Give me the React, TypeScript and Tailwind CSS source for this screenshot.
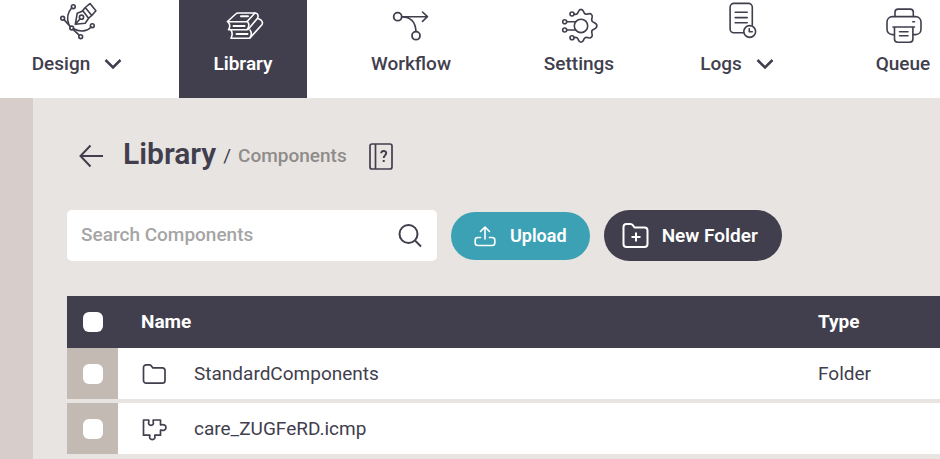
import type { ReactNode } from "react";
import clsx from "clsx";

function Icon({ children }: { children: ReactNode }) {
  return (
    <svg
      viewBox="0 0 44 44"
      className="size-11 shrink-0"
      fill="none"
      stroke="currentColor"
      strokeWidth="1.6"
      strokeLinecap="round"
      strokeLinejoin="round"
      aria-hidden="true"
    >
      {children}
    </svg>
  );
}

const designIcon = (
  <Icon>
    <circle cx="18.3" cy="6.7" r="1.9" />
    <circle cx="7.7" cy="18.3" r="1.9" />
    <circle cx="16.7" cy="28" r="1.9" />
    <circle cx="37.3" cy="25.7" r="1.9" />
    <circle cx="25.7" cy="36.7" r="1.9" />
    <path d="M9 19.6l6.400 7M18 29.400l6.400 6" />
    <path d="M16.800 7.800c-4 4.500-5.400 10-3 16.400M18.600 28.700c6 3.600 14 2.800 17.500-1.600" />
    <path d="M20.300 24.300l1.900-11 5.800-2.300 5.600 7.300-3.400 4.900zM20.300 24.300l4.700-5.300" />
    <circle cx="26.500" cy="17.200" r="2.100" />
    <path d="M27.600 10.800l2.600-3.300 6.600 8-3.200 2.600M30.200 7.500l4.800-3.900 5.900 7.200-4.100 4.700" />
  </Icon>
);

const libraryIcon = (
  <Icon>
    <path d="M6.500 21.500l8.200-7.500c.7-.7 1.500-1 2.500-1h16.500c3 0 3.900 2.300 3 5l-9 10.700c-.6.700-1.200 1-2 1H7.500c1.600-2.200 1.600-5 0-7.200" />
    <path d="M6.500 21.800h18c1 0 1.800-.4 2.400-1.100l7-7.700M26.500 21.800c1.900 1.500 1.700 5-.3 7.500" />
    <path d="M20 16.300h7M12.500 25.900h11" strokeWidth="2" />
    <path d="M10 30c1.500 2.600 1.500 5.400 0 8.200h17.500c1 0 1.800-.4 2.400-1.200l11-12.300c1.200-2 .5-4.600-3.400-6" />
    <path d="M29 30c1.600 2 1.600 5 0 7.800" />
    <path d="M15.500 34h11" strokeWidth="2" />
  </Icon>
);

const workflowIcon = (
  <Icon>
    <circle cx="8.700" cy="16.700" r="4" strokeWidth="1.800" />
    <circle cx="27" cy="35.700" r="4" strokeWidth="1.800" />
    <path d="M12.700 16.700h25.500M33.500 12l5 4.700-5 4.700M13 17c8.500 0 13.500 5 14 14.500" />
  </Icon>
);

const settingsIcon = (
  <Icon>
    <circle cx="15" cy="14" r="2" />
    <circle cx="7.700" cy="21.700" r="2" />
    <circle cx="7.700" cy="30" r="2" />
    <circle cx="15" cy="37.700" r="2" />
    <circle cx="24" cy="25.900" r="6.700" />
    <path d="M9.700 21.700h9M9.700 30h9" />
    <path d="M17 14c1.500.6 3 .4 3.800-1 .9-1.700.8-3.600 3.200-3.600s2.300 1.900 3.200 3.600c1 1.700 2.700 1.400 4.300.8 2.400-.7 4.400 1.300 3.600 3.700-.6 1.700-1 3.400.8 4.400 1.700.9 4 1.200 4 3.900s-2.300 3-4 3.900c-1.800 1-1.400 2.700-.8 4.400.8 2.400-1.200 4.400-3.600 3.700-1.600-.6-3.300-.9-4.300.8-.9 1.700-.8 3.600-3.200 3.600s-2.300-1.900-3.200-3.600c-.8-1.400-2.300-1.500-3.800-.9" />
  </Icon>
);

const logsIcon = (
  <Icon>
    <path d="M28.800 32.700h-10c-2 0-3.700-1.700-3.700-3.700V7.200c0-2.100 1.700-3.800 3.800-3.800h14.600c2.100 0 3.800 1.700 3.800 3.800v18" />
    <path d="M20.200 12.300h12M20.200 17.600h12M20.200 22.800h12" />
    <circle cx="34.700" cy="31.500" r="5.900" />
    <path d="M34.300 28.700v3h3" />
  </Icon>
);

const queueIcon = (
  <Icon>
    <path d="M14 16.500v-4.300c0-1.800 1.300-3.100 3.100-3.100h12c1.800 0 3.200 1.300 3.200 3.100v4.300" />
    <path d="M13 34.600h-1.600c-3.100 0-5.400-2.400-5.400-5.400v-7c0-3.200 2.300-5.600 5.400-5.600h23.200c3.100 0 5.400 2.400 5.400 5.600v7c0 3-2.300 5.400-5.400 5.400h-2.300" />
    <path d="M12 27h21.500M13.500 27v12c0 1.900 1.300 3.200 3.200 3.200h12c1.900 0 3.200-1.300 3.200-3.200V27" />
    <path d="M18.500 31.700h8.500M18.500 35.800h8.500M31.800 21.700h1.700" />
  </Icon>
);

function Chevron() {
  return (
    <svg viewBox="0 0 18 12" className="h-3 w-[18px]" fill="none" stroke="currentColor" strokeWidth="2.500" aria-hidden="true">
      <path d="M1.500 2l7.500 7.500L16.500 2" />
    </svg>
  );
}

const navItems = [
  { label: "Design", icon: designIcon, width: "w-[154px] mr-[25px]", menu: true },
  { label: "Library", icon: libraryIcon, width: "w-32", active: true },
  { label: "Workflow", icon: workflowIcon, width: "w-52" },
  { label: "Settings", icon: settingsIcon, width: "w-32" },
  { label: "Logs", icon: logsIcon, width: "w-[188px]", menu: true },
  { label: "Queue", icon: queueIcon, width: "w-36" },
];

function FolderIcon() {
  return (
    <svg viewBox="0 0 26 24" className="h-6 w-[26px]" fill="none" stroke="currentColor" strokeWidth="1.700" strokeLinejoin="round" aria-hidden="true">
      <path d="M2.500 18.500v-13c0-1.500 1.200-2.700 2.700-2.700h3.100c.9 0 1.600.4 2.100 1.100l1.500 2h9.400c1.500 0 2.700 1.200 2.700 2.700v9.900c0 1.500-1.200 2.700-2.700 2.700H5.200c-1.500 0-2.700-1.200-2.700-2.700z" />
    </svg>
  );
}

function PuzzleIcon() {
  return (
    <svg viewBox="0 0 26 24" className="h-6 w-[26px]" fill="none" stroke="currentColor" strokeWidth="1.700" strokeLinejoin="round" aria-hidden="true">
      <path d="M2.500 3h5.300v2c-.8 1.900.3 3.300 2.200 3.300s3-1.400 2.200-3.300V3h7.300v4.800h1.200c1.800-.8 4.300.4 4.300 2.700s-2.500 3.500-4.300 2.700h-1.200v5h-5.700v.9c.8 1.900-.5 3.500-2.500 3.500s-3.300-1.600-2.500-3.500v-.9H2.500z" />
    </svg>
  );
}

const rows = [
  { name: "StandardComponents", type: "Folder", icon: <FolderIcon /> },
  { name: "care_ZUGFeRD.icmp", type: "", icon: <PuzzleIcon /> },
];

function Checkbox({ label }: { label: string }) {
  return (
    <input
      type="checkbox"
      aria-label={label}
      className="block mx-auto size-5 appearance-none rounded-md bg-white checked:bg-[#3da1b5]"
    />
  );
}

export default function App() {
  return (
    <div className="min-h-screen flex flex-col overflow-hidden bg-[#e8e4e1] text-[19px] leading-6 text-[#413e4d] font-['Roboto',sans-serif]">
      <nav className="flex bg-white font-medium">
        {navItems.map((item) => (
          <a
            key={item.label}
            href="#"
            className={clsx(
              "shrink-0 flex flex-col items-center gap-2 pb-[22px]",
              item.width,
              item.active && "bg-[#413e4d] text-white font-semibold"
            )}
          >
            {item.icon}
            <span className="flex items-center gap-[14px]">
              {item.label}
              {item.menu && <Chevron />}
            </span>
          </a>
        ))}
      </nav>

      <div className="flex flex-1">
        <aside className="w-[33px] shrink-0 bg-[#d7cdca]" />
        <main className="flex-1 min-w-0 pl-[34px] pt-[38px]">
          <header className="flex items-center pl-3">
            <button type="button" aria-label="Back" className="mr-5 pt-1">
              <svg viewBox="0 0 24 24" className="size-6" fill="none" stroke="currentColor" strokeWidth="2" aria-hidden="true">
                <path d="M24 12H1.500M11.500 1.500L1.500 12l10 10.500" />
              </svg>
            </button>
            <h1 className="text-[30px] leading-9 font-semibold">Library</h1>
            <span className="mx-[7px] pt-1">/</span>
            <a href="#" className="pt-1 font-medium text-[#8f8b8a]">
              Components
            </a>
            <button type="button" aria-label="Help" className="ml-[22px] pt-1">
              <svg viewBox="0 0 24 28" className="h-7 w-6" fill="none" stroke="currentColor" strokeWidth="1.700" aria-hidden="true">
                <rect x="1" y="2" width="22" height="25" rx="2" />
                <path d="M6.500 2v25" />
                <path d="M12.200 11.300c0-3 5-3.200 5-.2 0 2.200-2.500 2.400-2.500 5M14.700 18v2" strokeWidth="2" />
              </svg>
            </button>
          </header>

          <div className="flex items-center gap-[14px] mt-[38px]">
            <div className="flex items-center w-[370px] h-[51px] rounded-[5px] bg-white px-[14px]">
              <input
                type="search"
                aria-label="Search Components"
                placeholder="Search Components"
                className="flex-1 min-w-0 pb-0.5 font-medium outline-none placeholder:text-[#a5a5a5]"
              />
              <button type="button" aria-label="Search">
                <svg viewBox="0 0 26 26" className="size-[26px]" fill="none" stroke="currentColor" strokeWidth="2" aria-hidden="true">
                  <circle cx="11.500" cy="11" r="9" />
                  <path d="M18 17.500l6 6" />
                </svg>
              </button>
            </div>
            <button
              type="button"
              className="flex items-center gap-[14px] h-12 rounded-full bg-[#3da1b5] px-[23px] text-lg font-semibold text-white"
            >
              <svg viewBox="0 0 22 22" className="size-[22px]" fill="none" stroke="currentColor" strokeWidth="1.600" strokeLinecap="round" strokeLinejoin="round" aria-hidden="true">
                <path d="M11 14V2M6.500 6.500L11 2l4.500 4.500M6.500 12.500H4C2.500 12.500 1.200 13.500 1.200 15v3c0 1.500 1.300 2.500 2.800 2.500h14c1.500 0 2.800-1 2.800-2.500v-3c0-1.500-1.300-2.500-2.800-2.500h-2.500" />
              </svg>
              Upload
            </button>
            <button
              type="button"
              className="flex items-center gap-[13px] h-[51px] rounded-full bg-[#413e4d] pl-[18px] pr-6 font-semibold text-white"
            >
              <svg viewBox="0 0 27 27" className="size-[27px]" fill="none" stroke="currentColor" strokeWidth="2" strokeLinejoin="round" aria-hidden="true">
                <path d="M1.500 22V5c0-1.700 1.300-3 3-3h4c1 0 1.700.4 2.300 1.200l1.700 2.300h10c1.700 0 3 1.300 3 3V22c0 1.700-1.300 3-3 3h-18c-1.700 0-3-1.300-3-3z" />
                <path d="M14 10.500v9M9.500 15h9" />
              </svg>
              New Folder
            </button>
          </div>

          <table className="w-full mt-[35px] table-fixed border-separate border-spacing-0 text-left">
            <thead>
              <tr className="h-[52px] bg-[#413e4d] text-white">
                <th className="w-[51px] p-0">
                  <Checkbox label="Select all" />
                </th>
                <th className="p-0 pl-[23px] font-bold">Name</th>
                <th className="w-[122px] p-0 font-bold">Type</th>
              </tr>
            </thead>
            <tbody>
              {rows.map((row) => (
                <tr key={row.name} className="h-[55px] bg-white">
                  <td className="p-0 border-b-4 border-[#e8e4e1] bg-[#c3bab3]">
                    <Checkbox label={`Select ${row.name}`} />
                  </td>
                  <td className="p-0 pl-[23px] border-b-4 border-[#e8e4e1]">
                    <a href="#" className="flex items-center gap-[27px]">
                      {row.icon}
                      {row.name}
                    </a>
                  </td>
                  <td className="p-0 border-b-4 border-[#e8e4e1]">{row.type}</td>
                </tr>
              ))}
            </tbody>
          </table>
        </main>
      </div>
    </div>
  );
}
